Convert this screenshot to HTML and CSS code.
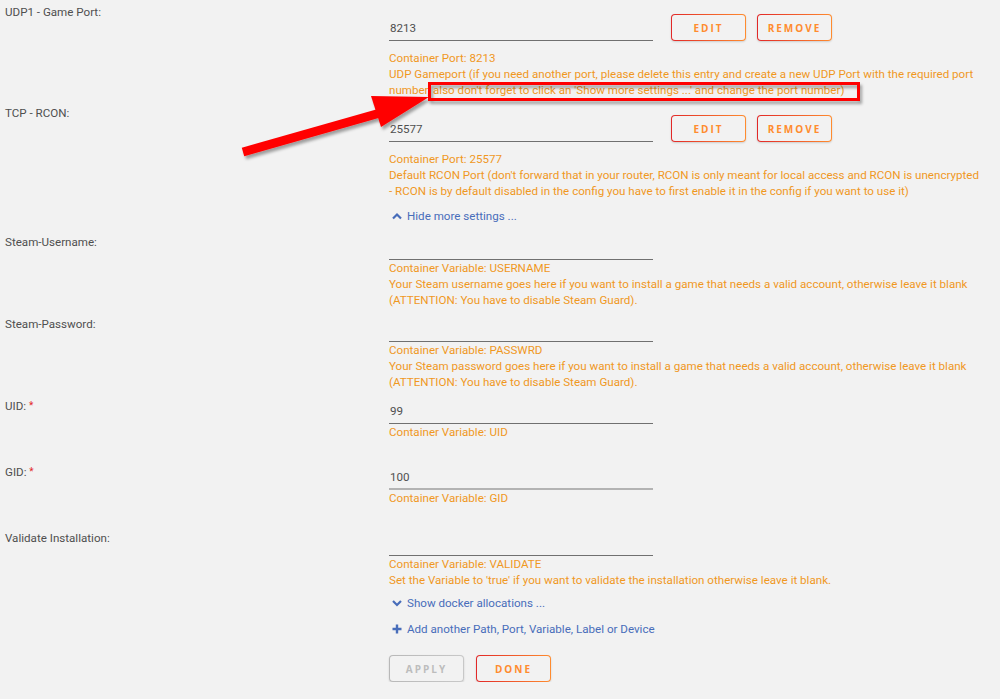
FILE: index.html
```html
<!DOCTYPE html>
<html lang="en">
<head>
    <meta charset="UTF-8">
    <meta name="viewport" content="width=device-width, initial-scale=1.0">
    <title>Docker Template</title>
    <link rel="stylesheet" href="styles.css">
</head>
<body>

<div class="form">
    <div class="row">
        <div class="label">UDP1 - Game Port:</div>
        <div class="field">
            <div class="inputline">
                <input class="value" type="text" value="8213">
                <button class="btn">Edit</button>
                <button class="btn">Remove</button>
            </div>
            <div class="help port-help">Container Port: 8213<br>UDP Gameport (if you need another port, please delete this entry and create a new UDP Port with the required port number, also don't forget to click an 'Show more settings ...' and change the port number)</div>
        </div>
    </div>

    <div class="row">
        <div class="label">TCP - RCON:</div>
        <div class="field">
            <div class="inputline">
                <input class="value" type="text" value="25577">
                <button class="btn">Edit</button>
                <button class="btn">Remove</button>
            </div>
            <div class="help port-help">Container Port: 25577<br>Default RCON Port (don't forward that in your router, RCON is only meant for local access and RCON is unencrypted <span class="nowrap">- RCON</span> is by default disabled in the config you have to first enable it in the config if you want to use it)</div>
            <a class="toggle hide-link" href="#">
                <svg width="10" height="10" viewBox="0 0 10 10"><path d="M1 7.5 L5 3.5 L9 7.5" fill="none" stroke="#486dba" stroke-width="2.2"/></svg>
                Hide more settings ...
            </a>
        </div>
    </div>

    <div class="row">
        <div class="label">Steam-Username:</div>
        <div class="field">
            <input class="value var" type="text" value="">
            <div class="help">Container Variable: USERNAME<br>Your Steam username goes here if you want to install a game that needs a valid account, otherwise leave it blank (ATTENTION: You have to disable Steam Guard).</div>
        </div>
    </div>

    <div class="row">
        <div class="label">Steam-Password:</div>
        <div class="field">
            <input class="value var" type="text" value="">
            <div class="help">Container Variable: PASSWRD<br>Your Steam password goes here if you want to install a game that needs a valid account, otherwise leave it blank (ATTENTION: You have to disable Steam Guard).</div>
        </div>
    </div>

    <div class="row">
        <div class="label">UID: <span class="req">*</span></div>
        <div class="field">
            <input class="value var" type="text" value="99">
            <div class="help">Container Variable: UID<br>&nbsp;</div>
        </div>
    </div>

    <div class="row">
        <div class="label">GID: <span class="req">*</span></div>
        <div class="field">
            <input class="value var focus" type="text" value="100">
            <div class="help">Container Variable: GID<br>&nbsp;</div>
        </div>
    </div>

    <div class="row">
        <div class="label">Validate Installation:</div>
        <div class="field">
            <input class="value var" type="text" value="">
            <div class="help">Container Variable: VALIDATE<br>Set the Variable to 'true' if you want to validate the installation otherwise leave it blank.</div>
        </div>
    </div>

    <div class="extra">
        <a class="toggle show-link" href="#">
            <svg width="10" height="10" viewBox="0 0 10 10"><path d="M1 3 L5 7 L9 3" fill="none" stroke="#486dba" stroke-width="2.2"/></svg>
            Show docker allocations ...
        </a>
        <a class="toggle add-link" href="#">
            <svg width="10" height="10" viewBox="0 0 10 10"><path d="M5 0.5 V9.5 M0.5 5 H9.5" fill="none" stroke="#486dba" stroke-width="2.4"/></svg>
            Add another Path, Port, Variable, Label or Device
        </a>
        <div class="actions">
            <button class="btn disabled">Apply</button>
            <button class="btn">Done</button>
        </div>
    </div>
</div>

<!-- annotation drawn over the screenshot -->
<svg class="annotation" width="1000" height="699" viewBox="0 0 1000 699">
    <defs>
        <filter id="shadow" x="-10%" y="-10%" width="130%" height="150%">
            <feDropShadow dx="2" dy="3" stdDeviation="1.5" flood-color="#000" flood-opacity="0.35"/>
        </filter>
    </defs>
    <g filter="url(#shadow)">
        <rect x="429.5" y="83.5" width="429" height="16" fill="none" stroke="#ff0000" stroke-width="3"/>
        <line x1="243" y1="152" x2="380" y2="113" stroke="#ff0000" stroke-width="9"/>
        <polygon points="371,96 429,97 381,127" fill="#ff0000"/>
    </g>
</svg>

</body>
</html>
```

FILE: styles.css
```css
body {
    margin: 0;
    background: #f2f2f2;
    font-family: Roboto, "Liberation Sans", sans-serif;
    font-size: 11.6px;
    color: #4f4f4f;
}
.form {
    position: relative;
}
.row {
    display: flex;
    margin-bottom: 4px;
}
.row:first-child {
    margin-bottom: 3px;
}
.label {
    width: 389px;
    flex: none;
    box-sizing: border-box;
    padding: 4px 0 0 5px;
    line-height: 16px;
}
.req {
    color: #e22828;
    font-size: 10px;
    vertical-align: top;
}
.field {
    flex: 1;
    padding-right: 4px;
}
.inputline {
    display: flex;
    align-items: flex-end;
    height: 27px;
    margin-top: 14px;
}
.value {
    display: block;
    width: 264px;
    height: 21px;
    box-sizing: border-box;
    padding: 0 0 4px 1px;
    border: none;
    border-bottom: 1px solid #707070;
    background: transparent;
    font-family: inherit;
    font-size: 11.6px;
    line-height: 16px;
    color: #4f4f4f;
    outline: none;
}
.inputline .value {
    margin-right: 18px;
}
.value.var {
    margin-top: 9px;
}
.value.focus {
    border-bottom: 2px solid #b3b3b3;
}
.help {
    color: #f0981f;
    line-height: 16px;
}
.port-help {
    margin-top: 9px;
}
.nowrap {
    white-space: nowrap;
}
.btn {
    width: 75px;
    height: 27px;
    margin-right: 11px;
    padding: 0;
    border: 1px solid transparent;
    border-radius: 4px;
    background: linear-gradient(#f2f2f2, #f2f2f2) padding-box, linear-gradient(90deg, #e22828, #ff8c2f) border-box;
    color: #ff8c2f;
    font-family: "Open Sans", sans-serif;
    font-size: 10px;
    font-weight: bold;
    letter-spacing: 2px;
    text-transform: uppercase;
    box-shadow: 0 1px 2px rgba(0, 0, 0, 0.15);
    cursor: pointer;
}
.btn.disabled {
    background: linear-gradient(#f2f2f2, #f2f2f2) padding-box, linear-gradient(90deg, #b8b8b8, #c8c8c8) border-box;
    color: #bdbdbd;
    cursor: default;
}
.toggle {
    display: flex;
    align-items: center;
    gap: 5px;
    height: 16px;
    line-height: 16px;
    color: #486dba;
    text-decoration: none;
}
.toggle svg {
    margin-left: 3px;
}
.hide-link {
    margin-top: 9px;
    margin-bottom: 2px;
}
.extra {
    margin-left: 389px;
}
.show-link {
    margin-top: 7px;
}
.add-link {
    margin-top: 10px;
}
.actions {
    display: flex;
    margin-top: 18px;
}
.actions .btn {
    margin-right: 12px;
}
.annotation {
    position: absolute;
    top: 0;
    left: 0;
    pointer-events: none;
}
```
